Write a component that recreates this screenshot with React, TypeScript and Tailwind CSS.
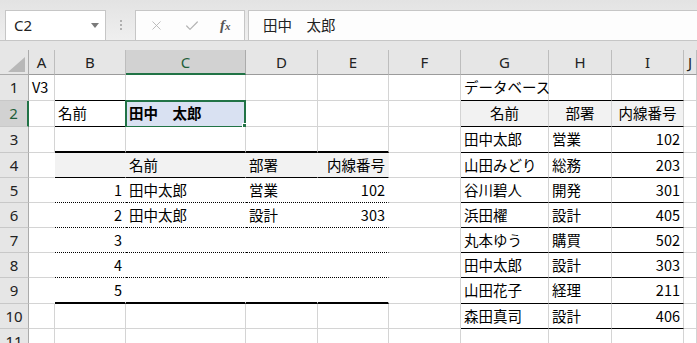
import { X, Check } from "lucide-react";

type Cell = {
  t?: string;
  a?: "l" | "r" | "c";
  b?: "g" | "k" | "d" | "t";
  r?: "g" | "n";
  bg?: string;
  bold?: boolean;
  sel?: boolean;
};

const widths = ["w-[26px]", "w-[71px]", "w-[120px]", "w-[72px]", "w-[71px]", "w-[72px]", "w-[88px]", "w-[63px]", "w-[72px]", "w-[13px]"];
const heights = ["h-[26px]", "h-[26px]", "h-[26px]", "h-[25px]", "h-[25px]", "h-[25px]", "h-[25px]", "h-[25px]", "h-[26px]", "h-[25px]", "h-[25px]"];
const letters = ["A", "B", "C", "D", "E", "F", "G", "H", "I", "J"];

const bottomCls = {
  g: "border-b border-b-[#d4d4d4]",
  k: "border-b border-b-black",
  d: "border-b border-dotted border-b-black",
  t: "border-b-2 border-b-black",
};
const rightCls = { g: "border-r border-r-[#d4d4d4]", n: "border-r border-r-transparent" };
const alignCls = { l: "justify-start", r: "justify-end", c: "justify-center" };

const db: [string, string, string][] = [
  ["田中太郎", "営業", "102"],
  ["山田みどり", "総務", "203"],
  ["谷川碧人", "開発", "301"],
  ["浜田櫂", "設計", "405"],
  ["丸本ゆう", "購買", "502"],
  ["田中太郎", "設計", "303"],
  ["山田花子", "経理", "211"],
  ["森田真司", "設計", "406"],
];

function buildGrid(): Cell[][] {
  const g: Cell[][] = [];
  for (let r = 0; r < 11; r++) {
    const row: Cell[] = [];
    for (let c = 0; c < 10; c++) row.push({});
    g.push(row);
  }
  g[0][0].t = "V3";
  g[0][6].t = "データベース";
  g[0][1].b = "k";
  g[1][1] = { t: "名前", b: "k" };
  g[1][2] = { t: "田中　太郎", bold: true, sel: true, bg: "bg-[#d9e1f2]" };
  // left table
  for (let c = 1; c <= 4; c++) g[2][c].b = "t";
  for (let r = 3; r <= 8; r++) {
    g[r][0].r = "n";
    for (let c = 1; c <= 4; c++) {
      g[r][c].r = "n";
      g[r][c].b = r === 3 ? "k" : r === 8 ? "t" : "d";
    }
  }
  for (let c = 1; c <= 4; c++) g[3][c].bg = "bg-[#f2f2f2]";
  g[3][2].t = "名前";
  g[3][3].t = "部署";
  g[3][4] = { ...g[3][4], t: "内線番号", a: "r" };
  for (let i = 0; i < 5; i++) {
    g[4 + i][1] = { ...g[4 + i][1], t: String(i + 1), a: "r" };
  }
  g[4][2].t = "田中太郎";
  g[4][3].t = "営業";
  g[4][4] = { ...g[4][4], t: "102", a: "r" };
  g[5][2].t = "田中太郎";
  g[5][3].t = "設計";
  g[5][4] = { ...g[5][4], t: "303", a: "r" };
  // right table
  for (let c = 6; c <= 8; c++) g[0][c].b = "k";
  g[1][6] = { t: "名前", a: "c", b: "k", bg: "bg-[#f2f2f2]" };
  g[1][7] = { t: "部署", a: "c", b: "k", bg: "bg-[#f2f2f2]" };
  g[1][8] = { t: "内線番号", a: "c", b: "k", bg: "bg-[#f2f2f2]" };
  db.forEach(([n, d, x], i) => {
    g[2 + i][6] = { t: n, b: "k" };
    g[2 + i][7] = { t: d, b: "k" };
    g[2 + i][8] = { t: x, a: "r", b: "k" };
  });
  return g;
}

function SheetCell({ cell, w }: { cell: Cell; w: string }) {
  return (
    <div
      className={`relative flex shrink-0 items-center whitespace-nowrap px-[3px] ${w} ${alignCls[cell.a ?? "l"]} ${bottomCls[cell.b ?? "g"]} ${rightCls[cell.r ?? "g"]} ${cell.bg ?? "bg-white"} ${cell.bold ? "font-bold" : ""}`}
    >
      {cell.t}
      {cell.sel && (
        <>
          <div className="pointer-events-none absolute -left-[1px] -top-[1px] -right-[1px] -bottom-[2px] border-2 border-[#217346]" />
          <div className="absolute -right-[4px] -bottom-[4px] h-[7px] w-[7px] border border-white bg-[#217346]" />
        </>
      )}
    </div>
  );
}

export default function App() {
  const grid = buildGrid();
  return (
    <div className="h-[343px] w-[697px] overflow-hidden bg-white font-['Noto_Sans_CJK_JP','Noto_Sans',sans-serif] text-[14.5px] leading-none text-black">
      {/* formula bar */}
      <div className="flex h-[41px] items-start border-b border-[#c6c6c6] bg-gradient-to-b from-[#e3e3e3] to-[#efefef] pt-[10px]">
        <div className="ml-[5px] flex h-[31px] w-[101px] items-center justify-between border border-[#c6c6c6] bg-white pl-[8px] pr-[6px] font-['Noto_Sans',sans-serif] text-[15px] text-[#222]">
          <span>C2</span>
          <span className="h-0 w-0 border-x-[4px] border-t-[5px] border-x-transparent border-t-[#7a7a7a]" />
        </div>
        <div className="ml-[14px] mr-[13px] mt-[10px] flex flex-col gap-[2px]">
          <span className="h-[2px] w-[2px] bg-[#b0b0b0]" />
          <span className="h-[2px] w-[2px] bg-[#b0b0b0]" />
          <span className="h-[2px] w-[2px] bg-[#b0b0b0]" />
        </div>
        <div className="flex h-[31px] w-[110px] items-center border border-[#c6c6c6] bg-[#fdfdfd]">
          <X size={15} strokeWidth={1.4} className="ml-[13px] text-[#b3b3b3]" />
          <Check size={16} strokeWidth={1.8} className="ml-[20px] text-[#b3b3b3]" />
          <span className="ml-[20px] font-['Liberation_Serif',serif] text-[15px] font-bold italic text-[#555]">
            f<span className="text-[11px]">x</span>
          </span>
        </div>
        <div className="ml-[3px] flex h-[31px] flex-1 items-center border-y border-l border-[#c6c6c6] bg-[#fdfdfd] pl-[14px] text-[14.5px] text-[#222]">
          田中　太郎
        </div>
      </div>
      <div className="h-[9px] bg-[#e6e6e6]" />
      {/* column headers */}
      <div className="flex h-[25px] bg-[#e6e6e6] font-['Noto_Sans',sans-serif] text-[15px] text-[#222]">
        <div className="relative w-[29px] shrink-0 border-r border-b border-[#ababab]">
          <svg className="absolute left-[8px] top-[7px]" width="17" height="15" viewBox="0 0 17 15">
            <polygon points="0,15 17,15 17,0" fill="#b8b8b8" />
          </svg>
        </div>
        {letters.map((l, i) =>
          i === 2 ? (
            <div key={l} className={`flex shrink-0 items-center justify-center border-r border-r-[#ababab] border-b-2 border-b-[#217346] bg-[#d2d2d2] pt-[2px] text-[#1f5e3a] ${widths[i]}`}>
              {l}
            </div>
          ) : (
            <div key={l} className={`flex shrink-0 items-center justify-center border-r border-b border-r-[#bdbdbd] border-b-[#9b9b9b] ${widths[i]}`}>
              {l}
            </div>
          )
        )}
        <div className="flex-1 border-b border-b-[#9b9b9b]" />
      </div>
      {/* rows */}
      {grid.map((row, r) => (
        <div key={r} className={`flex ${heights[r]}`}>
          <div
            className={`flex w-[29px] shrink-0 items-center justify-center border-b border-b-[#c8c8c8] font-['Noto_Sans',sans-serif] text-[15px] ${
              r === 1 ? "border-r-2 border-r-[#217346] bg-[#d2d2d2] text-[#1f5e3a]" : "border-r border-r-[#ababab] bg-[#e6e6e6] text-[#222]"
            }`}
          >
            {r + 1}
          </div>
          {row.map((cell, c) => (
            <SheetCell key={c} cell={cell} w={widths[c]} />
          ))}
        </div>
      ))}
    </div>
  );
}
